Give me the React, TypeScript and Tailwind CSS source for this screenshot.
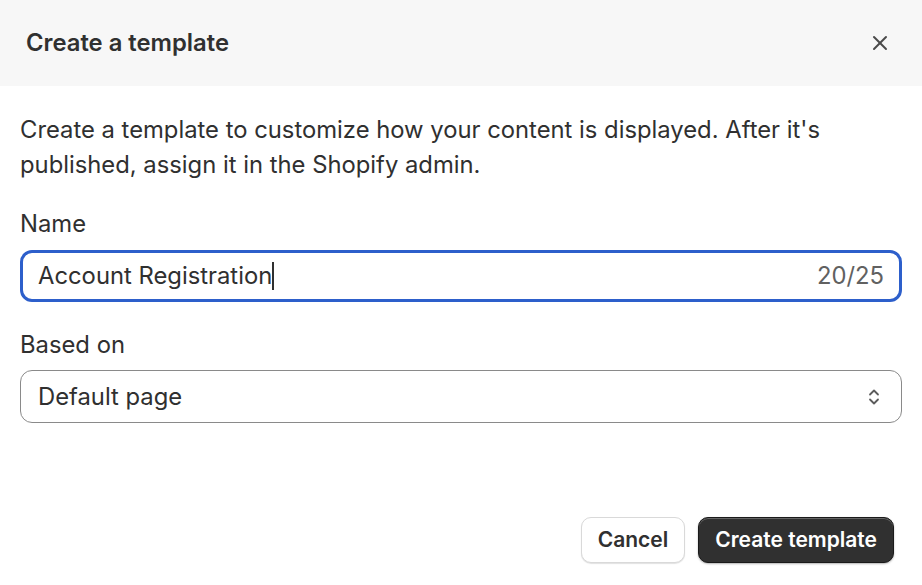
import { X } from "lucide-react";

export default function App() {
    return (
        <div className="w-[922px] h-[585px] bg-white flex flex-col font-['Inter',sans-serif] text-[#303030]">
            <div className="h-[86px] bg-[#f7f7f7] flex items-center justify-between pl-[26px] pr-[30px] shrink-0">
                <h1 className="text-[23.8px] font-semibold text-[#303030]">Create a template</h1>
                <X size={24} strokeWidth={2} className="text-[#4a4a4a]" />
            </div>

            <div className="flex flex-col px-5 pt-[26px]">
                <p className="text-[23.8px] leading-[35px]">
                    Create a template to customize how your content is displayed. After it's published, assign it in the Shopify admin.
                </p>

                <label className="text-[23.8px] leading-[30px] mt-[27px]">Name</label>
                <div className="mt-[11px] h-[52px] rounded-[12px] border-[3px] border-[#2d5fcb] flex items-center pl-[15px] pr-[15px] text-[23.8px]">
                    <span className="flex-1 flex items-center">
                        Account Registration
                        <span className="inline-block w-[1.5px] h-[28px] bg-[#303030]" />
                    </span>
                    <span className="text-[#616161]">20/25</span>
                </div>

                <label className="text-[23.8px] leading-[30px] mt-[28px]">Based on</label>
                <div className="mt-[10px] h-[53px] rounded-[12px] border border-[#8a8a8a] flex items-center pl-[17px] pr-[21px] text-[23.8px]">
                    <span className="flex-1">Default page</span>
                    <svg width="12" height="20" viewBox="0 0 12 20" fill="none" stroke="#5c5c5c" strokeWidth="1.8" strokeLinecap="round" strokeLinejoin="round">
                        <path d="M2 7.5 L6 3.5 L10 7.5" />
                        <path d="M2 12.5 L6 16.5 L10 12.5" />
                    </svg>
                </div>
            </div>

            <div className="flex justify-end gap-[13px] pr-[28px] mt-auto mb-[22px]">
                <button className="h-[46px] px-[16px] rounded-[10px] bg-white border border-[#d9d9d9] shadow-[0_1px_1px_rgba(0,0,0,0.12)] text-[21px] font-semibold text-[#303030]">
                    Cancel
                </button>
                <button className="h-[46px] px-[16px] rounded-[10px] bg-[#303030] border border-[#1a1a1a] shadow-[inset_0_1px_0_rgba(255,255,255,0.25),0_1px_2px_rgba(0,0,0,0.3)] text-[21px] font-semibold text-white">
                    Create template
                </button>
            </div>
        </div>
    );
}
